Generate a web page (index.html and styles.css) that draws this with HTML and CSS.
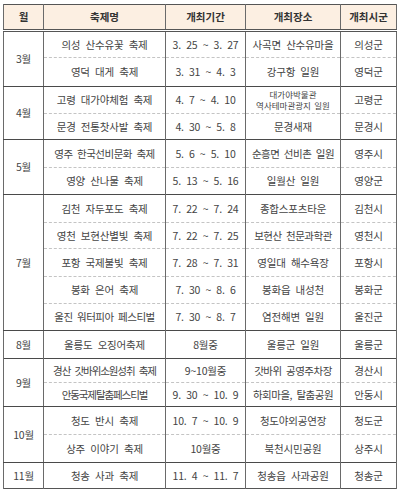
FILE: index.html
```html
<!DOCTYPE html>
<html lang="ko">
<head>
<meta charset="utf-8">
<link rel="stylesheet" href="styles.css">
</head>
<body>
<table class="fest">
<colgroup>
<col class="c1"><col class="c2"><col class="c3"><col class="c4"><col class="c5">
</colgroup>
<thead>
<tr class="h26"><th>월</th><th>축제명</th><th>개최기간</th><th>개최장소</th><th>개최시군</th></tr>
</thead>
<tbody>
<tr class="h27 grp"><td rowspan="2" class="mon">3월</td><td>의성 산수유꽃 축제</td><td>3. 25 ~ 3. 27</td><td>사곡면 산수유마을</td><td>의성군</td></tr>
<tr class="h29 sub"><td>영덕 대게 축제</td><td>3. 31 ~ 4. 3</td><td>강구항 일원</td><td>영덕군</td></tr>
<tr class="h27 grp"><td rowspan="2" class="mon">4월</td><td>고령 대가야체험 축제</td><td>4. 7 ~ 4. 10</td><td class="two">대가야박물관<br>역사테마관광지 일원</td><td>고령군</td></tr>
<tr class="h26 sub"><td>문경 전통찻사발 축제</td><td>4. 30 ~ 5. 8</td><td>문경새재</td><td>문경시</td></tr>
<tr class="h28 grp"><td rowspan="2" class="mon">5월</td><td class="snug">영주 한국선비문화 축제</td><td>5. 6 ~ 5. 10</td><td class="snug">순흥면 선비촌 일원</td><td>영주시</td></tr>
<tr class="h27 sub"><td>영양 산나물 축제</td><td>5. 13 ~ 5. 16</td><td>일월산 일원</td><td>영양군</td></tr>
<tr class="h28 grp"><td rowspan="5" class="mon">7월</td><td>김천 자두포도 축제</td><td>7. 22 ~ 7. 24</td><td>종합스포츠타운</td><td>김천시</td></tr>
<tr class="h26 sub"><td>영천 보현산별빛 축제</td><td>7. 22 ~ 7. 25</td><td class="snug">보현산 천문과학관</td><td>영천시</td></tr>
<tr class="h28 sub"><td>포항 국제불빛 축제</td><td>7. 28 ~ 7. 31</td><td>영일대 해수욕장</td><td>포항시</td></tr>
<tr class="h27 sub"><td>봉화 은어 축제</td><td>7. 30 ~ 8. 6</td><td>봉화읍 내성천</td><td>봉화군</td></tr>
<tr class="h27 sub"><td class="snug">울진 워터피아 페스티벌</td><td>7. 30 ~ 8. 7</td><td>염전해변 일원</td><td>울진군</td></tr>
<tr class="h28 grp"><td class="mon">8월</td><td>울릉도 오징어축제</td><td>8월중</td><td>울릉군 일원</td><td>울릉군</td></tr>
<tr class="h24 grp"><td rowspan="2" class="mon">9월</td><td class="tight">경산 갓바위소원성취 축제</td><td>9~10월중</td><td class="snug">갓바위 공영주차장</td><td>경산시</td></tr>
<tr class="h24 sub"><td class="tight">안동국제탈춤페스티벌</td><td>9. 30 ~ 10. 9</td><td class="snug">하회마을, 탈춤공원</td><td>안동시</td></tr>
<tr class="h28 grp"><td rowspan="2" class="mon">10월</td><td>청도 반시 축제</td><td>10. 7 ~ 10. 9</td><td>청도야외공연장</td><td>청도군</td></tr>
<tr class="h28 sub"><td>상주 이야기 축제</td><td>10월중</td><td>북천시민공원</td><td>상주시</td></tr>
<tr class="h26 grp"><td class="mon">11월</td><td>청송 사과 축제</td><td>11. 4 ~ 11. 7</td><td>청송읍 사과공원</td><td>청송군</td></tr>
</tbody>
</table>
</body>
</html>
```
FILE: styles.css
```css
html, body {
  margin: 0;
  padding: 0;
  background: #ffffff;
}
body {
  padding: 4px 4px 0 3px;
  font-family: "Noto Sans CJK KR", "Noto Sans", sans-serif;
  color: #444444;
}
.fest {
  border-collapse: collapse;
  width: 393px;
  table-layout: fixed;
  font-size: 10.5px;
  letter-spacing: -0.2px;
  word-spacing: 2.5px;
  border: 1px solid #555;
}
.c1 { width: 40px; }
.c2 { width: 122px; }
.c3 { width: 80px; }
.c4 { width: 95px; }
.c5 { width: 56px; }
.fest th, .fest td {
  padding: 0;
  text-align: center;
  vertical-align: middle;
  line-height: 14px;
  border-left: 1px solid #6a6a6a;
  border-right: 1px solid #6a6a6a;
  white-space: nowrap;
  overflow: hidden;
}
.fest th {
  background: #fcefe2;
  font-weight: bold;
  font-size: 10.5px;
  letter-spacing: 0;
  color: #333;
  border-bottom: 3px double #555;
}
.grp td { border-top: 1px solid #4a4a4a; }
.sub td { border-top: 1px dashed #c4c4c4; }
.sub td[rowspan], .grp td[rowspan] { border-bottom: 1px solid #4a4a4a; }
.fest td.two {
  font-size: 8.5px;
  line-height: 11px;
  letter-spacing: 0;
  word-spacing: 1px;
}
.fest td.snug {
  letter-spacing: -0.5px;
  word-spacing: 2px;
}
.fest td.tight {
  letter-spacing: -1.1px;
  word-spacing: 2.5px;
}
.h24 { height: 24px; }
.h26 { height: 26px; }
.h27 { height: 27px; }
.h28 { height: 28px; }
.h29 { height: 29px; }
```
